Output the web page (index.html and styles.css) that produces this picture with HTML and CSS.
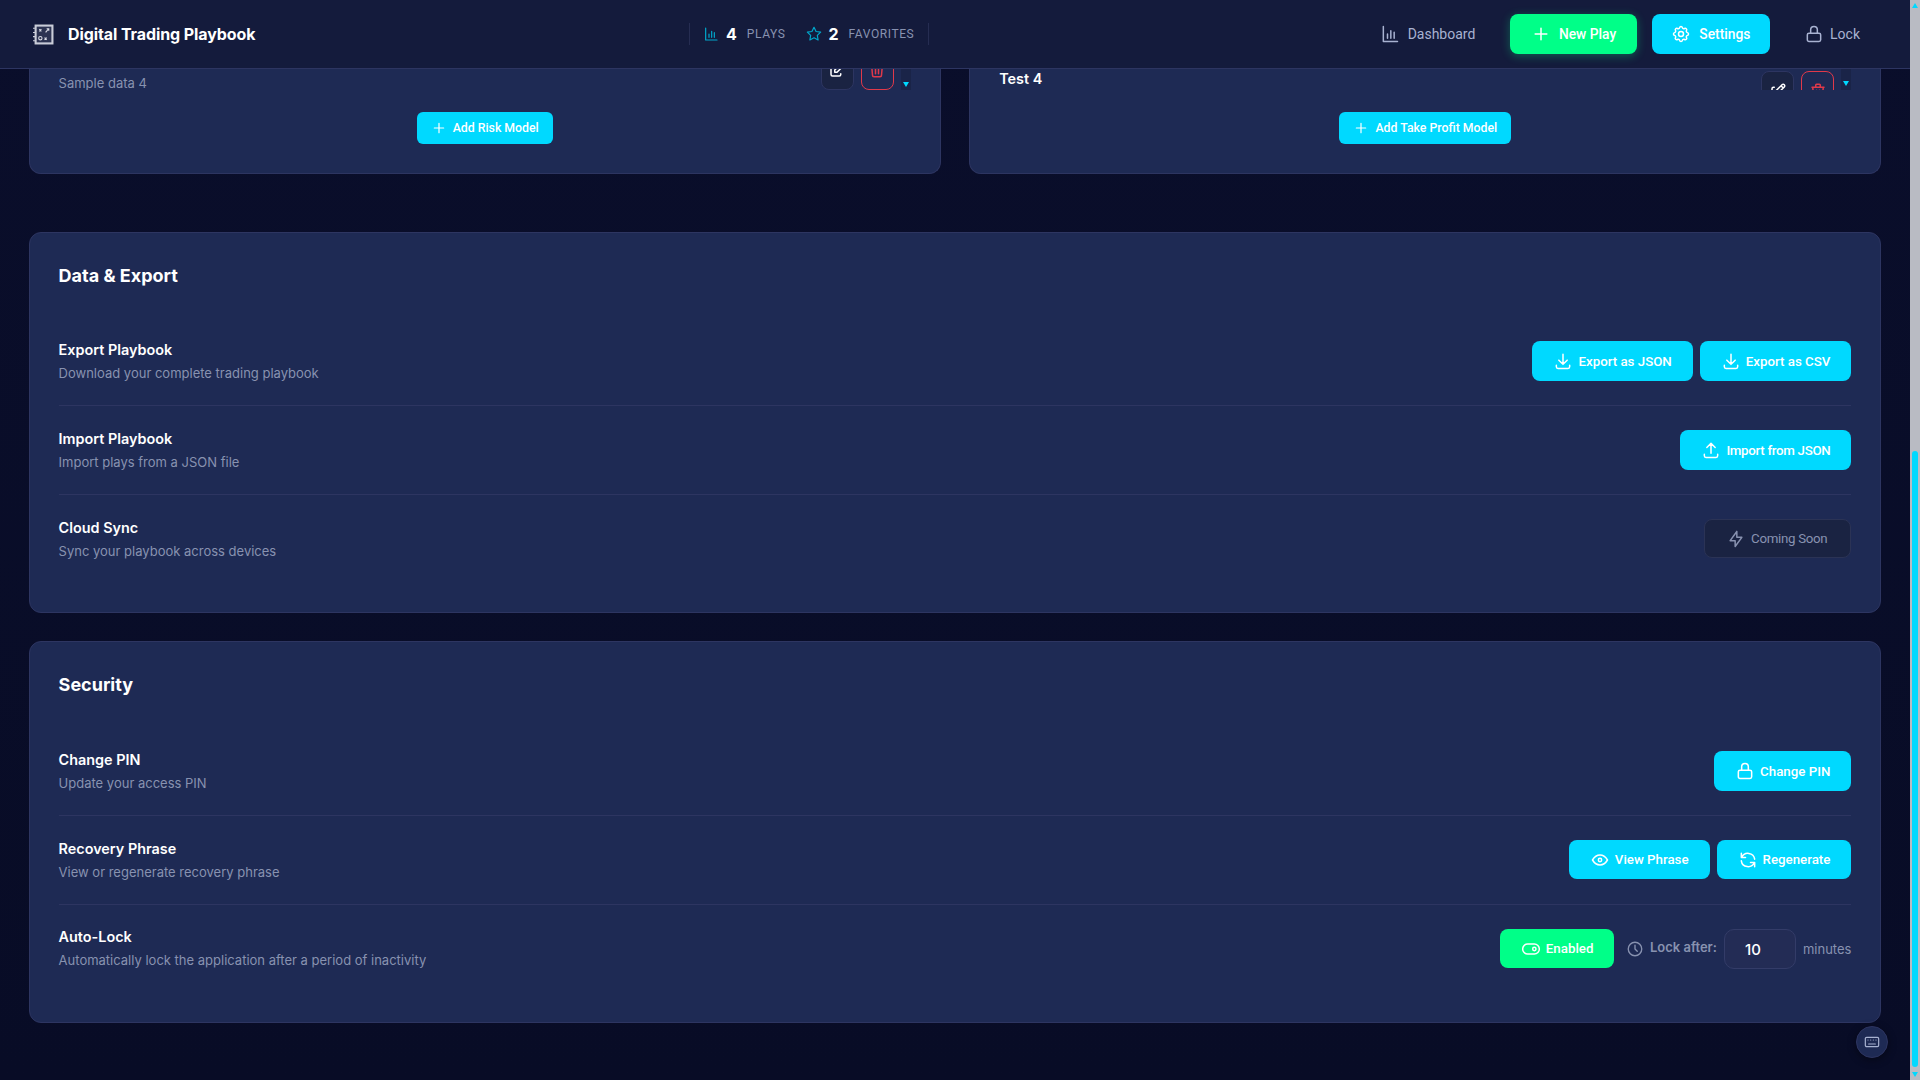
FILE: index.html
```html
<!DOCTYPE html>
<html>
  <head>
    <title>Digital Trading Playbook</title>
    <link rel="stylesheet" href="styles.css">
  </head>
  <body>
    <svg class="sprite" xmlns="http://www.w3.org/2000/svg">
      <symbol id="i-chart" viewBox="0 0 24 24"><path d="M4 3v18h17M9 17v-5M13 17V8M17 17v-7"/></symbol>
      <symbol id="i-star" viewBox="0 0 24 24"><path d="M12 17.75l-6.172 3.245l1.179 -6.873l-5 -4.867l6.9 -1l3.086 -6.253l3.086 6.253l6.9 1l-5 4.867l1.179 6.873z"/></symbol>
      <symbol id="i-plus" viewBox="0 0 24 24"><path d="M12 5v14M5 12h14"/></symbol>
      <symbol id="i-gear" viewBox="0 0 24 24"><path d="M10.325 4.317c.426 -1.756 2.924 -1.756 3.35 0a1.724 1.724 0 0 0 2.573 1.066c1.543 -.94 3.31 .826 2.37 2.37a1.724 1.724 0 0 0 1.065 2.572c1.756 .426 1.756 2.924 0 3.35a1.724 1.724 0 0 0 -1.066 2.573c.94 1.543 -.826 3.31 -2.37 2.37a1.724 1.724 0 0 0 -2.572 1.065c-.426 1.756 -2.924 1.756 -3.35 0a1.724 1.724 0 0 0 -2.573 -1.066c-1.543 .94 -3.31 -.826 -2.37 -2.37a1.724 1.724 0 0 0 -1.065 -2.572c-1.756 -.426 -1.756 -2.924 0 -3.35a1.724 1.724 0 0 0 1.066 -2.573c-.94 -1.543 .826 -3.31 2.37 -2.37c1 .608 2.296 .07 2.572 -1.065z"/><circle cx="12" cy="12" r="3"/></symbol>
      <symbol id="i-lock" viewBox="0 0 24 24"><path d="M4 13a2 2 0 0 1 2 -2h12a2 2 0 0 1 2 2v6a2 2 0 0 1 -2 2h-12a2 2 0 0 1 -2 -2zM8 11V7a4 4 0 1 1 8 0v4"/></symbol>
      <symbol id="i-edit" viewBox="0 0 24 24"><path d="M7 7h-1a2 2 0 0 0 -2 2v9a2 2 0 0 0 2 2h9a2 2 0 0 0 2 -2v-1M20.385 6.585a2.1 2.1 0 0 0 -2.97 -2.97l-8.415 8.385v3h3l8.385 -8.415zM16 5l3 3"/></symbol>
      <symbol id="i-trash" viewBox="0 0 24 24"><path d="M4 7h16M10 11v6M14 11v6M5 7l1 12a2 2 0 0 0 2 2h8a2 2 0 0 0 2 -2l1 -12M9 7V4a1 1 0 0 1 1 -1h4a1 1 0 0 1 1 1v3"/></symbol>
      <symbol id="i-download" viewBox="0 0 24 24"><path d="M4 17v2a2 2 0 0 0 2 2h12a2 2 0 0 0 2 -2v-2M7 11l5 5l5 -5M12 4v12"/></symbol>
      <symbol id="i-upload" viewBox="0 0 24 24"><path d="M4 17v2a2 2 0 0 0 2 2h12a2 2 0 0 0 2 -2v-2M7 9l5 -5l5 5M12 4v12"/></symbol>
      <symbol id="i-bolt" viewBox="0 0 24 24"><path d="M13 3v7h6l-8 11v-7H5l8 -11"/></symbol>
      <symbol id="i-eye" viewBox="0 0 24 24"><path d="M10 12a2 2 0 1 0 4 0a2 2 0 0 0 -4 0M21 12c-2.4 4 -5.4 6 -9 6c-3.6 0 -6.6 -2 -9 -6c2.4 -4 5.4 -6 9 -6c3.6 0 6.6 2 9 6"/></symbol>
      <symbol id="i-refresh" viewBox="0 0 24 24"><path d="M20 11a8.1 8.1 0 0 0 -15.5 -2m-.5 -5v5h5M4 13a8.1 8.1 0 0 0 15.5 2m.5 5v-5h-5"/></symbol>
      <symbol id="i-toggle" viewBox="0 0 24 24"><rect x="2" y="6" width="20" height="12" rx="6"/><circle cx="16" cy="12" r="2"/></symbol>
      <symbol id="i-clock" viewBox="0 0 24 24"><circle cx="12" cy="12" r="9"/><path d="M12 7v5l3 3"/></symbol>
      <symbol id="i-keyboard" viewBox="0 0 24 24"><rect x="2" y="5" width="20" height="14" rx="2"/><path d="M6 9h.01M10 9h.01M14 9h.01M18 9h.01M7 15h10"/></symbol>
    </svg>

    <div class="page">
      <header class="topbar">
        <div class="brand">
          <svg class="brand-icon" viewBox="0 0 20 20">
            <rect x="1.5" y="0.5" width="18" height="19" fill="#c9ccd8"/>
            <rect x="3.5" y="2.5" width="14" height="15" fill="#2c3352"/>
            <path d="M0 4h2M0 8h2M0 12h2M0 16h2" stroke="#c9ccd8" fill="none"/>
            <path d="M6 5l2 2M8 5l-2 2M12 8l2.5 -3M13 4.5h2v2M11 13l2 2M13 13l-2 2" stroke="#d8dae4" stroke-width="1.1" fill="none"/>
            <circle cx="7" cy="13.5" r="1.6" stroke="#d8dae4" fill="none"/>
          </svg>
          <span class="brand-name">Digital Trading Playbook</span>
        </div>
        <div class="stats">
          <div class="stat">
            <svg class="icon stat-icon"><use href="#i-chart"/></svg>
            <span class="stat-num">4</span>
            <span class="stat-label">PLAYS</span>
          </div>
          <div class="stat">
            <svg class="icon stat-icon"><use href="#i-star"/></svg>
            <span class="stat-num">2</span>
            <span class="stat-label">FAVORITES</span>
          </div>
        </div>
        <nav class="nav">
          <a class="nav-link nav-dash"><svg class="icon"><use href="#i-chart"/></svg>Dashboard</a>
          <a class="btn btn-green btn-nav btn-new"><svg class="icon"><use href="#i-plus"/></svg>New Play</a>
          <a class="btn btn-nav btn-settings"><svg class="icon"><use href="#i-gear"/></svg>Settings</a>
          <a class="nav-link nav-lock"><svg class="icon"><use href="#i-lock"/></svg>Lock</a>
        </nav>
      </header>

      <main class="content">
        <div class="model-grid">
          <section class="card model-card">
            <div class="model-list model-list-end">
              <span class="model-desc">Sample data 4</span>
              <div class="model-actions">
                <span class="icon-btn"><svg class="icon"><use href="#i-edit"/></svg></span>
                <span class="icon-btn icon-btn-danger"><svg class="icon"><use href="#i-trash"/></svg></span>
                <span class="mini-scroll"><i class="arrow-down"></i></span>
              </div>
            </div>
            <div class="model-foot"><a class="btn btn-small"><svg class="icon"><use href="#i-plus"/></svg>Add Risk Model</a></div>
          </section>
          <section class="card model-card">
            <div class="model-list model-list-start">
              <span class="model-name">Test 4</span>
              <div class="model-actions">
                <span class="icon-btn"><svg class="icon"><use href="#i-edit"/></svg></span>
                <span class="icon-btn icon-btn-danger"><svg class="icon"><use href="#i-trash"/></svg></span>
                <span class="mini-scroll"><i class="arrow-down"></i></span>
              </div>
            </div>
            <div class="model-foot"><a class="btn btn-small"><svg class="icon"><use href="#i-plus"/></svg>Add Take Profit Model</a></div>
          </section>
        </div>

        <section class="card settings-card">
          <h2 class="card-title">Data &amp; Export</h2>
          <div class="row">
            <div class="row-text">
              <h3>Export Playbook</h3>
              <p>Download your complete trading playbook</p>
            </div>
            <div class="row-actions">
              <a class="btn"><svg class="icon"><use href="#i-download"/></svg>Export as JSON</a>
              <a class="btn"><svg class="icon"><use href="#i-download"/></svg>Export as CSV</a>
            </div>
          </div>
          <div class="row">
            <div class="row-text">
              <h3>Import Playbook</h3>
              <p>Import plays from a JSON file</p>
            </div>
            <div class="row-actions">
              <a class="btn btn-tight"><svg class="icon"><use href="#i-upload"/></svg>Import from JSON</a>
            </div>
          </div>
          <div class="row">
            <div class="row-text">
              <h3>Cloud Sync</h3>
              <p>Sync your playbook across devices</p>
            </div>
            <div class="row-actions">
              <a class="btn btn-off btn-tight"><svg class="icon"><use href="#i-bolt"/></svg>Coming Soon</a>
            </div>
          </div>
        </section>

        <section class="card settings-card security-card">
          <h2 class="card-title">Security</h2>
          <div class="row">
            <div class="row-text">
              <h3>Change PIN</h3>
              <p>Update your access PIN</p>
            </div>
            <div class="row-actions">
              <a class="btn"><svg class="icon"><use href="#i-lock"/></svg>Change PIN</a>
            </div>
          </div>
          <div class="row">
            <div class="row-text">
              <h3>Recovery Phrase</h3>
              <p>View or regenerate recovery phrase</p>
            </div>
            <div class="row-actions row-actions-short">
              <a class="btn"><svg class="icon"><use href="#i-eye"/></svg>View Phrase</a>
              <a class="btn"><svg class="icon"><use href="#i-refresh"/></svg>Regenerate</a>
            </div>
          </div>
          <div class="row">
            <div class="row-text">
              <h3>Auto-Lock</h3>
              <p>Automatically lock the application after a period of inactivity</p>
            </div>
            <div class="row-actions">
              <a class="btn btn-green"><svg class="icon"><use href="#i-toggle"/></svg>Enabled</a>
              <div class="lock-after">
                <svg class="icon"><use href="#i-clock"/></svg>
                <label for="lock-min">Lock after:</label>
                <input id="lock-min" type="text" value="10" />
                <span>minutes</span>
              </div>
            </div>
          </div>
        </section>
      </main>

      <a class="kbd-btn"><svg class="icon"><use href="#i-keyboard"/></svg></a>
    </div>

    <div class="scrollbar">
      <i class="arrow-up"></i>
      <div class="scroll-thumb"></div>
      <i class="arrow-down"></i>
    </div>
  </body>
</html>
```

FILE: styles.css
```css
html,
body {
  margin: 0;
  height: 100%;
  overflow: hidden;
}
body {
  display: flex;
  background: #0a0e27;
  color: #fff;
  font-family: "Inter", sans-serif;
}
h2, h3, p { margin: 0; }
.sprite { display: none; }
.icon {
  width: 20px;
  height: 20px;
  flex: none;
  fill: none;
  stroke: currentColor;
  stroke-width: 1.8;
  stroke-linecap: round;
  stroke-linejoin: round;
}

/* layout */
.page {
  flex: 1;
  min-width: 0;
  display: flex;
  flex-direction: column;
  background: linear-gradient(180deg, #0a0e2b, #080c26);
}
.topbar {
  height: 68px;
  flex: none;
  display: flex;
  align-items: center;
  background: #141b3c;
  border-bottom: 1px solid #2d3561;
  padding: 0 50px 0 33px;
  position: relative;
  z-index: 2;
}
.brand {
  width: 656px;
  display: flex;
  align-items: center;
  gap: 14px;
}
.brand-icon { width: 21px; height: 21px; }
.brand-name { font-size: 16px; font-weight: 700; letter-spacing: -.1px; }
.stats {
  display: flex;
  gap: 20px;
  height: 22px;
  align-items: center;
  padding: 0 14px 0 13px;
  border-left: 1px solid #262d52;
  border-right: 1px solid #262d52;
}
.stat { display: flex; align-items: center; }
.stat-icon { width: 16px; height: 16px; color: #00a8cc; margin-right: 7px; }
.stat-num { font-size: 16px; font-weight: 700; margin-right: 10px; }
.stat-label { font-family: "Roboto", sans-serif; font-size: 12px; letter-spacing: .6px; color: #8892b0; }
.nav {
  margin-left: auto;
  display: flex;
  align-items: center;
}
.nav-link {
  display: flex;
  align-items: center;
  gap: 8px;
  font-family: "Roboto", sans-serif;
  font-size: 14px;
  color: #a8b2d1;
}
.nav-dash { margin-right: 35px; }
.nav-lock { margin-left: 34.2px; gap: 6px; }
.btn {
  display: inline-flex;
  align-items: center;
  justify-content: center;
  gap: 5px;
  height: 40px;
  box-sizing: border-box;
  padding: 0 21px;
  border-radius: 8px;
  background: #00d9ff;
  color: #fff;
  font-family: "Roboto", sans-serif;
  font-size: 13.3px;
  font-weight: 500;
}
.btn-green { background: #00ff88; }
.btn-nav { gap: 8px; font-size: 13.8px; }
.btn-new { padding: 0 20.6px; box-shadow: 0 2px 10px rgba(0,255,136,.3); margin-right: 15px; }
.btn-settings { padding: 0 19.5px; }
.btn-tight { letter-spacing: -.3px; }
.btn-off {
  background: #1a2342;
  border: 1px solid #2b3355;
  color: #8892b0;
  font-weight: 400;
  padding: 0 23px 0 21px;
}
.btn-small {
  height: 32px;
  padding: 0 14px;
  font-size: 12.3px;
  gap: 6px;
  border-radius: 6px;
}
.btn-small .icon { width: 16px; height: 16px; }
.content {
  flex: 1;
  min-height: 0;
  overflow: hidden;
  padding: 0 28.8px;
}

/* cards */
.card {
  background: #1e2a54;
  border: 1px solid #2d3561;
  border-radius: 12px;
}
.model-grid {
  display: grid;
  grid-template-columns: 1fr 1fr;
  gap: 28.8px;
  margin-bottom: 58px;
}
.model-card {
  height: 105px;
  box-sizing: border-box;
  border-top: none;
  border-radius: 0 0 12px 12px;
  padding: 0 28.8px;
}
.model-list {
  height: 21px;
  overflow: hidden;
  display: flex;
  justify-content: space-between;
}
.model-list-end { align-items: flex-end; }
.model-list-start { padding-top: 2px; height: 19px; }
.model-desc { font-size: 13px; color: #8892b0; line-height: 14px; }
.model-name { font-size: 14.4px; font-weight: 600; margin-top: -1px; }
.model-actions { display: flex; flex: none; gap: 7px; }
.icon-btn {
  width: 33px;
  height: 40px;
  box-sizing: border-box;
  display: flex;
  align-items: center;
  justify-content: center;
  border: 1px solid #2d3561;
  border-radius: 8px;
  background: #1a2342;
  color: #fff;
}
.icon-btn .icon { width: 18px; height: 18px; stroke-width: 2; }
.icon-btn-danger { background: transparent; border-color: #e0394a; color: #e0394a; }
.mini-scroll {
  width: 10px;
  height: 40px;
  background: #1a2448;
  display: flex;
  align-items: flex-end;
  justify-content: center;
  padding-bottom: 3px;
  box-sizing: border-box;
}
.model-list-start .mini-scroll { margin-top: -2px; padding-bottom: 0; padding-top: 12px; align-items: flex-start; }
.model-foot { display: flex; justify-content: center; margin-top: 22px; }
.arrow-down,
.arrow-up {
  display: block;
  width: 0;
  height: 0;
  border-left: 3.5px solid transparent;
  border-right: 3.5px solid transparent;
}
.arrow-down { border-top: 5px solid #00d9ff; }
.arrow-up { border-bottom: 5px solid #00d9ff; }
.settings-card {
  padding: 28.8px;
  padding-bottom: 0;
  margin-bottom: 27.7px;
  box-sizing: border-box;
}
.card-title {
  font-size: 18px;
  font-weight: 700;
  line-height: 28px;
  margin-bottom: 27.5px;
}
.security-card .card-title { margin-bottom: 28.7px; }
.row {
  height: 89px;
  box-sizing: border-box;
  display: flex;
  align-items: center;
  justify-content: space-between;
  border-bottom: 1px solid #2d3561;
}
.row:last-child { border-bottom: none; padding-bottom: 0; height: 117px; align-items: flex-start; padding-top: 24px; }
.row-text h3 { font-size: 14.4px; font-weight: 600; line-height: 20px; margin-bottom: 3px; }
.row-text p { font-size: 13px; color: #8892b0; line-height: 20px; }
.row-actions { display: flex; align-items: flex-start; gap: 7px; }
.row:last-child .btn,
.row-actions-short .btn { height: 39px; }
.row-actions-short { margin-bottom: 1px; }
.row:last-child .row-text { margin-top: -1px; }
.security-card .row:last-child .row-text { margin-top: -2px; }
.lock-after {
  display: flex;
  align-items: center;
  gap: 7px;
  margin-left: 5px;
  font-size: 13px;
  color: #8892b0;
}
.lock-after .icon { width: 18px; height: 18px; margin-right: -1.5px; }
.lock-after label { font-weight: 600; margin-bottom: 5px; }
.lock-after input {
  width: 72px;
  height: 40px;
  box-sizing: border-box;
  padding: 0 20px;
  border: 1px solid #333c68;
  border-radius: 10px;
  background: #232c55;
  color: #fff;
  font-family: "Inter", sans-serif;
  font-size: 15px;
  font-weight: 500;
}

/* floating keyboard button */
.kbd-btn {
  position: fixed;
  right: 32px;
  bottom: 22px;
  width: 32px;
  height: 32px;
  border-radius: 50%;
  background: #1e2a54;
  color: #a8b2d1;
  display: flex;
  align-items: center;
  justify-content: center;
  box-shadow: 0 2px 8px rgba(0,0,0,.4);
  border: 1px solid #2d3561;
  box-sizing: border-box;
}
.kbd-btn .icon { width: 16px; height: 16px; }

/* page scrollbar */
.scrollbar {
  width: 10px;
  flex: none;
  background: #b9bbc3;
  display: flex;
  flex-direction: column;
  align-items: center;
  padding: 3px 0;
  box-sizing: border-box;
}
.scroll-thumb {
  width: 6px;
  margin-top: auto;
  height: 616px;
  margin-bottom: 5px;
  background: #00d9ff;
  border-radius: 3px;
}
```
